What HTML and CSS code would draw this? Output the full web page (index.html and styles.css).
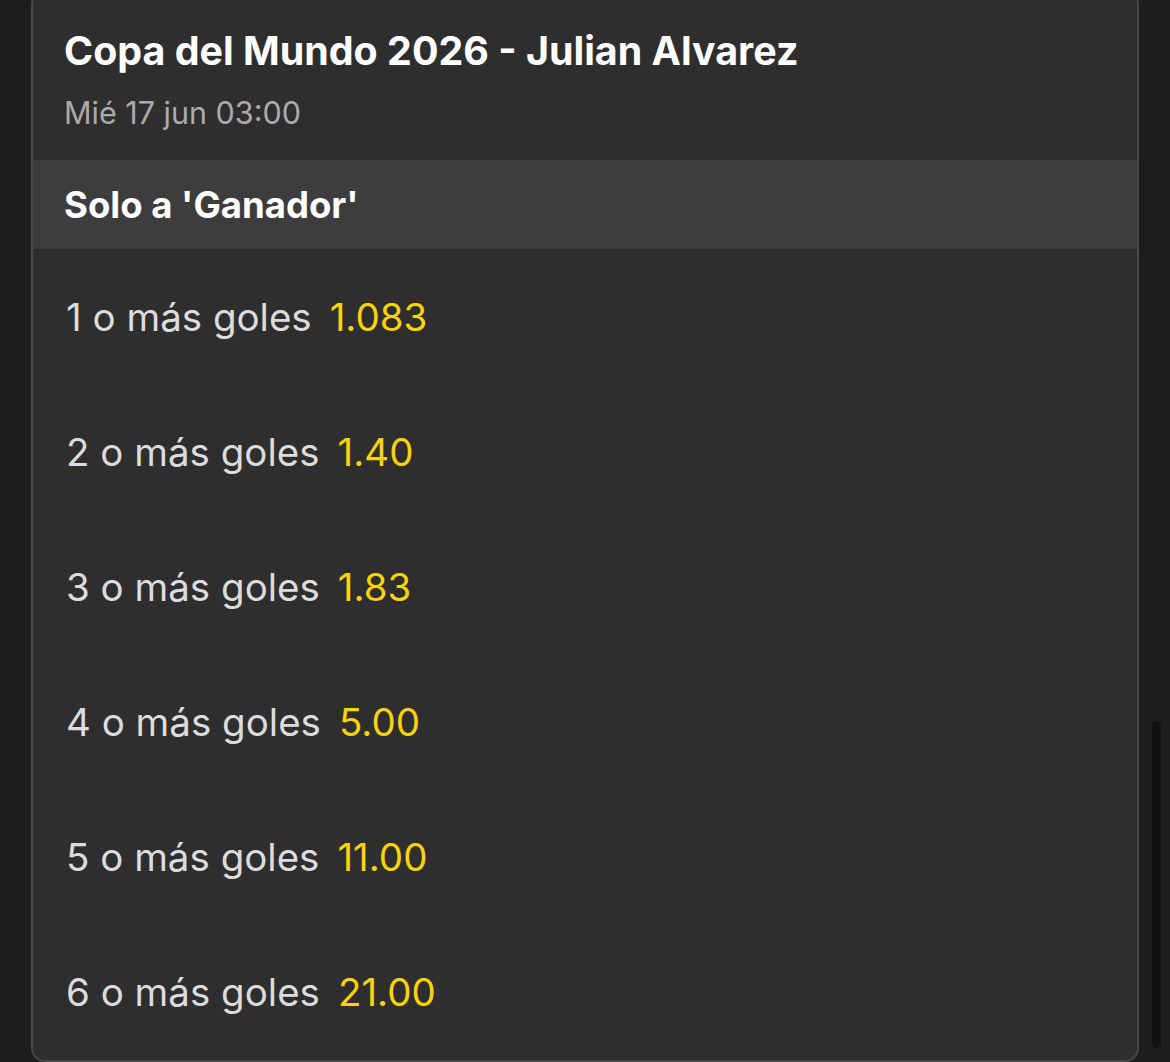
FILE: index.html
```html
<!DOCTYPE html>
<html lang="es">
<head>
<meta charset="utf-8">
<link rel="stylesheet" href="styles.css">
</head>
<body>
<div class="page">
  <div class="card">
    <div class="head">
      <div class="title">Copa del Mundo 2026 - Julian Alvarez</div>
      <div class="date">Mié 17 jun 03:00</div>
    </div>
    <div class="band">Solo a 'Ganador'</div>
    <div class="rows">
      <div class="row"><span class="lbl">1 o más goles</span><span class="odd">1.083</span></div>
      <div class="row"><span class="lbl">2 o más goles</span><span class="odd">1.40</span></div>
      <div class="row"><span class="lbl">3 o más goles</span><span class="odd">1.83</span></div>
      <div class="row"><span class="lbl">4 o más goles</span><span class="odd">5.00</span></div>
      <div class="row"><span class="lbl">5 o más goles</span><span class="odd">11.00</span></div>
      <div class="row"><span class="lbl">6 o más goles</span><span class="odd">21.00</span></div>
    </div>
  </div>
  <div class="scroll"><div class="thumb"></div></div>
</div>
</body>
</html>
```
FILE: styles.css
```css
html, body {
  margin: 0;
  padding: 0;
  background: #1d1d1d;
  height: 1062px;
  overflow: hidden;
}
body {
  font-family: Inter, "Noto Sans", sans-serif;
}
.page {
  position: relative;
  display: flex;
  padding-left: 31px;
}
.card {
  width: 1108px;
  box-sizing: border-box;
  margin-top: -10px;
  height: 1072px;
  background: #2e2e2e;
  border: 2px solid #484848;
  border-radius: 14px;
  overflow: hidden;
  display: flex;
  flex-direction: column;
}
.head {
  height: 168px;
  box-sizing: border-box;
  padding: 35px 0 0 31px;
}
.title {
  color: #ffffff;
  font-weight: 700;
  font-size: 39.4px;
  line-height: 48px;
}
.date {
  margin-top: 20px;
  color: #ababab;
  font-size: 30.5px;
  line-height: 36px;
}
.band {
  height: 89px;
  background: #3d3d3d;
  color: #ffffff;
  font-weight: 700;
  font-size: 36.5px;
  display: flex;
  align-items: center;
  padding-left: 31px;
}
.rows {
  display: flex;
  flex-direction: column;
}
.row {
  height: 135px;
  display: flex;
  align-items: center;
  padding-left: 33px;
  font-size: 38.5px;
  gap: 18px;
}
.lbl {
  color: #dcdcdc;
}
.odd {
  color: #fcd20f;
}
.scroll {
  position: absolute;
  left: 1152px;
  top: 721px;
  width: 9px;
  height: 327px;
  background: #111111;
  border-radius: 5px;
}
```
